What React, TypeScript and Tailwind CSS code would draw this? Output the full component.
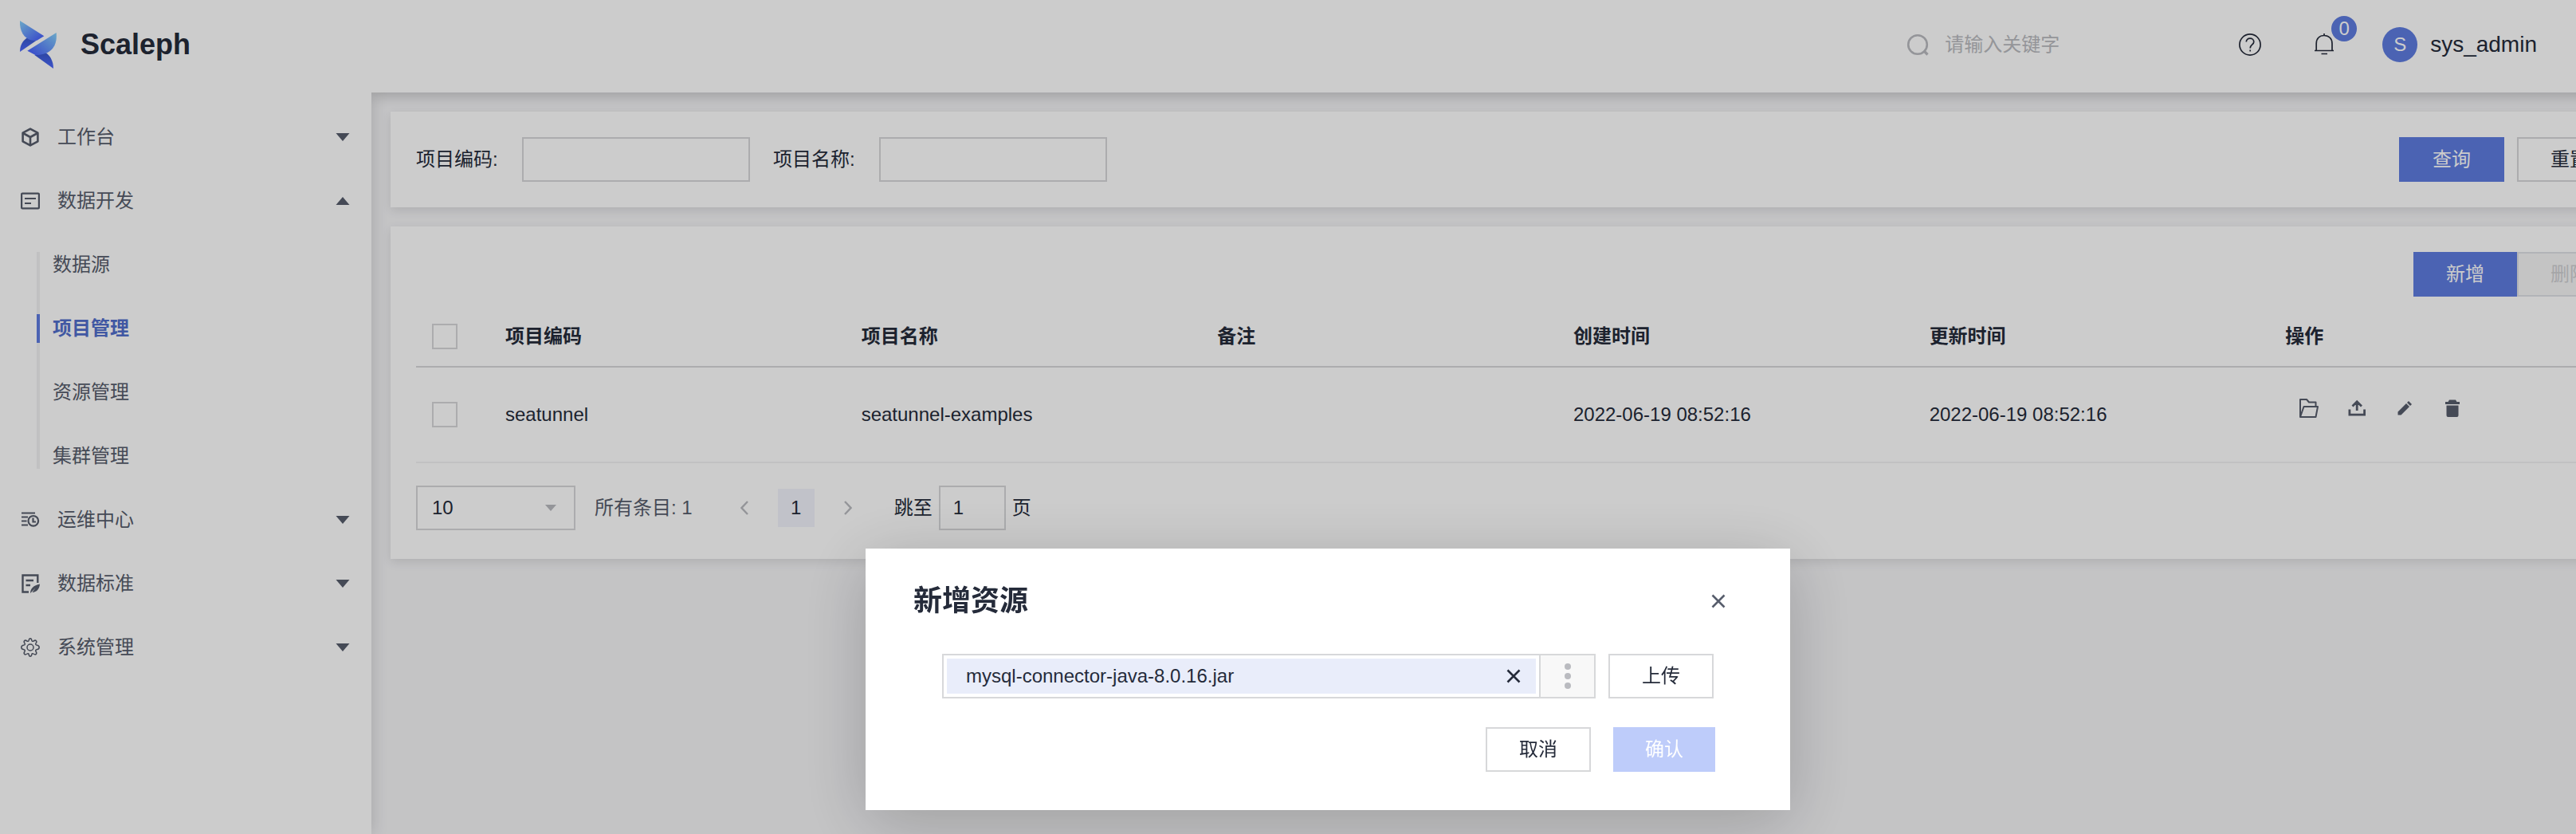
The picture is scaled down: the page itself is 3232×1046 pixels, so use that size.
import React from "react";

type IconProps = { className?: string };

const Logo = () => (
  <svg viewBox="75 78 138 180" className="h-[60px] w-[46px] shrink-0" aria-hidden="true">
    <defs>
      <linearGradient id="wingTop" x1="0" y1="0" x2="1" y2="1">
        <stop offset="0" stopColor="#86d2fa" />
        <stop offset="0.85" stopColor="#4c68fd" />
      </linearGradient>
      <linearGradient id="wingRight" x1="1" y1="0" x2="0.1" y2="0.8">
        <stop offset="0" stopColor="#86d2fa" />
        <stop offset="1" stopColor="#4c68fd" />
      </linearGradient>
      <linearGradient id="tail" x1="0.6" y1="0" x2="0.6" y2="1">
        <stop offset="0" stopColor="#3858cc" />
        <stop offset="1" stopColor="#4c68fd" />
      </linearGradient>
    </defs>
    <path d="M104 142C86 152 75 170 75 195L136 153Z" fill="url(#tail)" />
    <path d="M75 78L166 136L139 152C100 158 72 125 75 78Z" fill="url(#wingTop)" />
    <path d="M130 207L201 258C201 230 188 208 172 199Z" fill="url(#tail)" />
    <path d="M212 123C217 175 190 208 133 207L103 191Z" fill="url(#wingRight)" />
  </svg>
);

const CubeIcon = ({ className }: IconProps) => (
  <svg viewBox="0 0 24 24" className={className} fill="none" stroke="currentColor" strokeWidth="2.6" strokeLinejoin="round" aria-hidden="true">
    <path d="M12 1.6L21.4 6.700V17.300L12 22.4L2.600 17.300V6.700Z" />
    <path d="M3 7L12 12L21 7M12 12V22" />
  </svg>
);

const PanelIcon = ({ className }: IconProps) => (
  <svg viewBox="0 0 24 24" className={className} fill="none" stroke="currentColor" strokeWidth="2.2" aria-hidden="true">
    <rect x="1.1" y="2.6" width="21.8" height="18.8" rx="1" />
    <path d="M5 9H19M5 15H13" />
  </svg>
);

const ListClockIcon = ({ className }: IconProps) => (
  <svg viewBox="0 0 24 24" className={className} fill="none" stroke="currentColor" strokeWidth="2.2" aria-hidden="true">
    <path d="M1 3.500H18M1 8.500H9M1 13.500H7.500M1 18.500H9" />
    <circle cx="15.800" cy="13.300" r="6.300" />
    <path d="M15.500 9.500V14.500H19" />
  </svg>
);

const DocPenIcon = ({ className }: IconProps) => (
  <svg viewBox="0 0 24 24" className={className} fill="none" stroke="currentColor" aria-hidden="true">
    <path d="M21.300 11V1.500H2.500V22.500H10" strokeWidth="2.400" />
    <path d="M6.500 8H16M6.500 14H12" strokeWidth="2.600" />
    <path d="M12 24C12 18.500 16 14 24 12.500C23.500 19 20 22.500 14.500 23L18.500 17.500L12 24Z" fill="currentColor" stroke="none" />
  </svg>
);

const GearIcon = ({ className }: IconProps) => (
  <svg viewBox="0 0 24 24" className={className} fill="none" stroke="currentColor" strokeWidth="1.500" strokeLinejoin="round" aria-hidden="true">
    <circle cx="12" cy="12" r="4" />
    <path d="M10.200 3.200C10.400 1.500 11 .8 12 .8s1.600.7 1.800 2.400c.2 1 1.300 1.500 2.200.9C17.400 3 18.500 2.800 19.300 3.600c1 .9.700 2-.3 3.300-.7 1-.2 2 .9 2.200 2.200.3 3.300.8 3.300 2.900s-1.100 2.500-3.300 2.800c-1.100.2-1.600 1.200-.9 2.200 1 1.400 1.200 2.500.3 3.400-.8.800-1.900.6-3.300-.4-.9-.7-2-.2-2.200.8-.2 1.700-.8 2.400-1.800 2.400s-1.600-.7-1.800-2.400c-.2-1-1.300-1.500-2.200-.8-1.400 1-2.500 1.200-3.300.4-.9-.9-.7-2 .3-3.400.7-1 .2-2-.9-2.200C1.900 14.500.8 14.100.8 12s1.100-2.600 3.300-2.900c1.100-.2 1.600-1.200.9-2.200-1-1.300-1.200-2.400-.3-3.300.8-.8 1.900-.6 3.300.5.9.6 2 .1 2.200-.9Z" />
  </svg>
);

const SearchIcon = ({ className }: IconProps) => (
  <svg viewBox="0 0 28 28" className={className} fill="none" stroke="currentColor" strokeWidth="2.600" aria-hidden="true">
    <circle cx="14" cy="14" r="11.800" />
    <path d="M21.500 21.500L26.500 26.500" strokeWidth="3.200" />
  </svg>
);

const HelpIcon = ({ className }: IconProps) => (
  <svg viewBox="0 0 28 28" className={className} fill="none" stroke="currentColor" strokeWidth="1.700" aria-hidden="true">
    <circle cx="14" cy="14" r="13.100" />
    <path d="M9.300 10.500C9.300 8 11.300 6.200 14 6.200s4.800 1.800 4.800 4.300C18.800 14 14.200 14 14.200 18.500M14.200 20.500V22.500" />
  </svg>
);

const BellIcon = ({ className }: IconProps) => (
  <svg viewBox="0 0 28 28" className={className} fill="none" stroke="currentColor" strokeWidth="1.700" aria-hidden="true">
    <path d="M2 21.500H26M4.200 21.500V12.500C4.200 6.500 8 2.500 14 2.500s10 4 10 10V21.500M14 0V2.500M10.500 25.500H18" />
  </svg>
);

const FolderIcon = ({ className }: IconProps) => (
  <svg viewBox="0 0 24 24" className={className} fill="none" stroke="currentColor" strokeWidth="2" strokeLinejoin="round" aria-hidden="true">
    <path d="M1 23V1H9L12 4.500H20.500V10M1 23L5.500 10H23L20.500 23Z" />
  </svg>
);

const UploadIcon = ({ className }: IconProps) => (
  <svg viewBox="0 0 24 24" className={className} fill="none" stroke="currentColor" strokeWidth="2.800" aria-hidden="true">
    <path d="M2.900 13.500V20.100H21.600V13.500M12.200 15V4M6.500 9.500L12.200 3.800L18 9.500" />
  </svg>
);

const PencilIcon = ({ className }: IconProps) => (
  <svg viewBox="0 0 24 24" className={className} fill="currentColor" aria-hidden="true">
    <path d="M3.500 20.500V16.500L14 6L18 10L7.500 20.500ZM15 5L17 3L21 7L19 9Z" />
  </svg>
);

const TrashIcon = ({ className }: IconProps) => (
  <svg viewBox="0 0 24 24" className={className} fill="currentColor" aria-hidden="true">
    <path d="M3 4H6.500L8 1.500H16L17.500 4H21V7H3ZM4.500 8.500H19.500V21Q19.500 23 17.500 23H6.500Q4.500 23 4.500 21Z" />
  </svg>
);

const CloseIcon = ({ className }: IconProps) => (
  <svg viewBox="0 0 18 18" className={className} fill="none" stroke="currentColor" strokeWidth="2.600" aria-hidden="true">
    <path d="M1.500 1.500L16.500 16.500M16.500 1.500L1.500 16.500" />
  </svg>
);

const Caret = ({ up }: { up?: boolean }) => (
  <svg viewBox="0 0 18 10" className="h-[10px] w-[18px]" fill="currentColor" aria-hidden="true">
    <path d={up ? "M0.500 10H17.500L9 0Z" : "M0.500 0H17.500L9 10Z"} />
  </svg>
);

const Chevron = ({ right }: { right?: boolean }) => (
  <svg viewBox="0 0 10 18" className="h-[18px] w-[10px]" fill="none" stroke="currentColor" strokeWidth="2.400" aria-hidden="true">
    <path d={right ? "M1 1L8.500 9L1 17" : "M9 1L1.500 9L9 17"} />
  </svg>
);

const menu = [
  { label: "工作台", Icon: CubeIcon },
  { label: "数据开发", Icon: PanelIcon, children: ["数据源", "项目管理", "资源管理", "集群管理"] },
  { label: "运维中心", Icon: ListClockIcon },
  { label: "数据标准", Icon: DocPenIcon },
  { label: "系统管理", Icon: GearIcon },
];

const activeItem = "项目管理";

const Sidebar = () => (
  <aside className="relative z-10 w-[466px] shrink-0 bg-white shadow-[0_0_20px_rgba(0,0,0,0.16)]">
    <a href="#home" className="flex h-28 items-center gap-[30px] pl-[25px]">
      <Logo />
      <span className="text-[36px] font-bold">Scaleph</span>
    </a>
    <nav className="mt-5 text-[#575d6c]" aria-label="主菜单">
      {menu.map(({ label, Icon, children }) => (
        <div key={label}>
          <button type="button" aria-expanded={!!children} className="flex h-20 w-full items-center pr-[27px] pl-[26px]">
            <Icon className="h-6 w-6" />
            <span className="ml-[22px]">{label}</span>
            <span className="ml-auto">
              <Caret up={!!children} />
            </span>
          </button>
          {children && (
            <ul className="relative before:absolute before:top-6 before:bottom-6 before:left-[46px] before:w-1 before:bg-[#f2f2f3]">
              {children.map((item) => (
                <li key={item} className="relative flex h-20 items-center pl-[46px]">
                  <a
                    href="#menu"
                    className={
                      item === activeItem
                        ? "border-l-4 border-[#5e7ce0] pl-4 font-bold text-[#526ecc]"
                        : "border-l-4 border-transparent pl-4"
                    }
                  >
                    {item}
                  </a>
                </li>
              ))}
            </ul>
          )}
        </div>
      ))}
    </nav>
  </aside>
);

const Header = () => (
  <header className="relative z-20 -mr-[114px] flex h-[116px] items-center bg-white pr-[163px] pb-1 shadow-[0_4px_16px_rgba(0,0,0,0.2)]">
    <label className="ml-auto flex items-center gap-5 text-[#babbc0]">
      <SearchIcon className="h-7 w-7" />
      <input
        type="search"
        aria-label="搜索"
        placeholder="请输入关键字"
        className="w-[369px] bg-transparent outline-none placeholder:text-[#babbc0]"
      />
    </label>
    <button type="button" aria-label="帮助">
      <HelpIcon className="h-7 w-7" />
    </button>
    <button type="button" aria-label="通知" className="relative ml-[65px]">
      <BellIcon className="h-7 w-7" />
      <span className="absolute -top-[22px] left-[23px] flex h-8 w-8 items-center justify-center rounded-full bg-[#5e7ce0] text-white">0</span>
    </button>
    <button type="button" className="ml-[59px] flex items-center gap-4 text-[28px]">
      <span className="flex h-11 w-11 items-center justify-center rounded-full bg-[#5e7ce0] text-[24px] text-white">S</span>
      sys_admin
    </button>
  </header>
);

const columns = ["项目编码", "项目名称", "备注", "创建时间", "更新时间"];
const rows = [["seatunnel", "seatunnel-examples", "", "2022-06-19 08:52:16", "2022-06-19 08:52:16"]];
const actions = [
  { label: "打开", Icon: FolderIcon },
  { label: "上传", Icon: UploadIcon },
  { label: "编辑", Icon: PencilIcon },
  { label: "删除", Icon: TrashIcon },
];

const Check = ({ label }: { label: string }) => (
  <input type="checkbox" aria-label={label} className="block h-8 w-8 appearance-none border-2 border-[#d7d8da] bg-white" />
);

const Field = ({ id, label }: { id: string; label: string }) => (
  <div className="flex items-center">
    <label htmlFor={id} className="w-[133px]">
      {label}:
    </label>
    <input id={id} type="text" className="h-14 w-[286px] border-2 border-[#d7d8da] px-4 outline-none" />
  </div>
);

const SearchCard = () => (
  <form className="flex items-center gap-[29px] bg-white p-8 shadow-[0_4px_12px_rgba(0,0,0,0.1)]">
    <Field id="code" label="项目编码" />
    <Field id="name" label="项目名称" />
    <div className="ml-auto flex gap-4">
      <button type="button" className="h-14 w-[132px] bg-[#5e7ce0] text-white">
        查询
      </button>
      <button type="button" className="h-14 w-[132px] border-2 border-[#d7d8da]">
        重置
      </button>
    </div>
  </form>
);

const Pager = () => (
  <div className="flex items-center pt-7">
    <div className="relative">
      <select aria-label="每页条数" className="h-14 w-[200px] appearance-none border-2 border-[#d7d8da] bg-white pl-[18px]">
        <option>10</option>
      </select>
      <svg viewBox="0 0 14 8" className="pointer-events-none absolute top-6 right-6 h-2 w-[14px] text-[#babbc0]" fill="currentColor" aria-hidden="true">
        <path d="M0 0H14L7 8Z" />
      </svg>
    </div>
    <span className="ml-6 text-[#575d6c]">所有条目: 1</span>
    <button type="button" aria-label="上一页" className="ml-[60px] text-[#babbc0]">
      <Chevron />
    </button>
    <button type="button" aria-current="page" className="mx-[37px] h-12 w-[46px] bg-[#f2f3fc]">
      1
    </button>
    <button type="button" aria-label="下一页" className="text-[#babbc0]">
      <Chevron right />
    </button>
    <label htmlFor="jump" className="ml-[53px]">
      跳至
    </label>
    <input id="jump" type="text" defaultValue="1" className="mx-2 h-14 w-[84px] border-2 border-[#d7d8da] pl-4" />
    <span>页</span>
  </div>
);

const TableCard = () => (
  <section className="bg-white px-8 pt-8 pb-9 shadow-[0_4px_12px_rgba(0,0,0,0.1)]">
    <div className="flex justify-end">
      <button type="button" className="h-14 w-[130px] bg-[#5e7ce0] text-white">
        新增
      </button>
      <button type="button" disabled className="h-14 w-[132px] border-2 border-[#dfe1e6] bg-[#f5f5f6] text-[#cfd0d3]">
        删除
      </button>
    </div>
    <table className="mt-3 w-full table-fixed border-collapse text-left">
      <thead>
        <tr className="h-[76px] border-b-2 border-[#d7d8da]">
          <th className="w-[88px] pl-5">
            <Check label="全选" />
          </th>
          {columns.map((c) => (
            <th key={c} className="pl-6 font-bold">
              {c}
            </th>
          ))}
          <th className="pl-6 font-bold">操作</th>
        </tr>
      </thead>
      <tbody>
        {rows.map((row) => (
          <tr key={row[0]} className="h-[120px] border-b-2 border-[#f2f2f3]">
            <td className="pl-5">
              <Check label={row[0]} />
            </td>
            {row.map((cell, i) => (
              <td key={i} className="pl-6">
                {cell}
              </td>
            ))}
            <td className="pb-4 pl-[42px]">
              <div className="flex gap-9 text-[#575d6c]">
                {actions.map(({ label, Icon }) => (
                  <button key={label} type="button" aria-label={label}>
                    <Icon className="h-6 w-6" />
                  </button>
                ))}
              </div>
            </td>
          </tr>
        ))}
      </tbody>
    </table>
    <Pager />
  </section>
);

const UploadDialog = () => (
  <div className="fixed inset-0 z-30 flex items-start justify-center bg-black/20 pt-[688px] pl-[100px]">
    <div
      role="dialog"
      aria-modal="true"
      aria-labelledby="dialog-title"
      className="w-[1160px] bg-white pt-9 pb-12 shadow-[0_16px_80px_rgba(0,0,0,0.2)]"
    >
      <div className="flex h-[60px] items-center justify-between pr-[81px] pl-[60px]">
        <h2 id="dialog-title" className="text-[36px] font-bold">
          新增资源
        </h2>
        <button type="button" aria-label="关闭" className="text-[#575d6c]">
          <CloseIcon className="h-[18px] w-[18px]" />
        </button>
      </div>
      <div className="mt-9 flex gap-4 px-24">
        <div className="flex h-14 grow border-2 border-[#d7d8da]">
          <div className="m-1 flex grow items-center justify-between bg-[#e9edfa] pr-[19px] pl-6">
            mysql-connector-java-8.0.16.jar
            <button type="button" aria-label="移除文件">
              <CloseIcon className="h-[18px] w-[18px]" />
            </button>
          </div>
          <button
            type="button"
            aria-label="选择文件"
            className="flex w-[69px] flex-col items-center justify-center gap-1 border-l-2 border-[#d7d8da] bg-[#f8f8f8]"
          >
            <span className="h-2 w-2 rounded-full bg-[#babbc0]" />
            <span className="h-2 w-2 rounded-full bg-[#babbc0]" />
            <span className="h-2 w-2 rounded-full bg-[#babbc0]" />
          </button>
        </div>
        <button type="button" className="h-14 w-[132px] border-2 border-[#d7d8da]">
          上传
        </button>
      </div>
      <div className="mt-9 flex justify-end gap-7 pr-[94px]">
        <button type="button" className="h-14 w-[132px] border-2 border-[#d7d8da]">
          取消
        </button>
        <button type="button" disabled className="h-14 w-32 bg-[#beccfa] text-white">
          确认
        </button>
      </div>
    </div>
  </div>
);

export default function App() {
  return (
    <div className="flex min-h-screen overflow-hidden bg-[#f5f5f7] font-['Liberation_Sans','Noto_Sans_CJK_SC',sans-serif] text-[24px] leading-9 text-[#252b3a]">
      <Sidebar />
      <div className="min-w-0 flex-1 overflow-hidden">
        <Header />
        <main className="-mr-[114px] flex flex-col gap-6 p-6">
          <SearchCard />
          <TableCard />
        </main>
      </div>
      <UploadDialog />
    </div>
  );
}
